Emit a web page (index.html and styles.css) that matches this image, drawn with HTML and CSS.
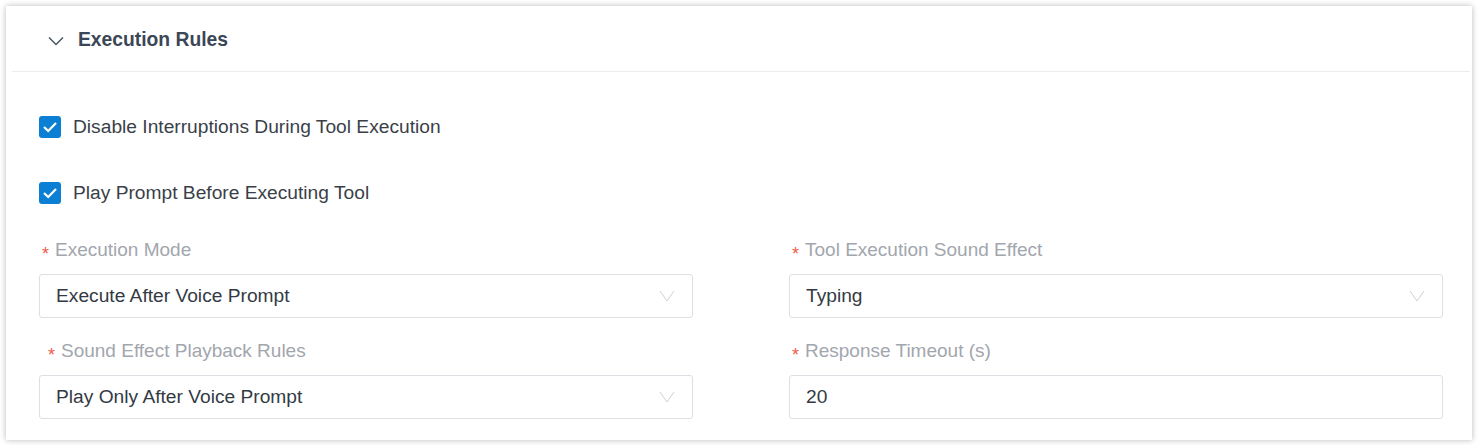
FILE: index.html
```html
<!DOCTYPE html>
<html lang="en">
<head>
  <meta charset="utf-8">
  <title>Execution Rules</title>
  <link rel="stylesheet" href="styles.css">
</head>
<body>
  <div class="page">
    <div class="card">
      <div class="card-head">
        <svg class="arrow" width="16" height="10" viewBox="0 0 16 10"><path d="M1 1.5 L8 8.5 L15 1.5" fill="none" stroke="#4a5563" stroke-width="1.5"/></svg>
        <span class="title">Execution Rules</span>
      </div>
      <div class="card-body">
        <label class="check">
          <span class="box"><svg width="22" height="22" viewBox="0 0 22 22"><path d="M5 11 L9.2 15 L17 7" fill="none" stroke="#fff" stroke-width="2.2"/></svg></span>
          Disable Interruptions During Tool Execution
        </label>
        <label class="check">
          <span class="box"><svg width="22" height="22" viewBox="0 0 22 22"><path d="M5 11 L9.2 15 L17 7" fill="none" stroke="#fff" stroke-width="2.2"/></svg></span>
          Play Prompt Before Executing Tool
        </label>

        <div class="grid">
          <div class="item">
            <div class="label"><span class="req">*</span>Execution Mode</div>
            <div class="select">Execute After Voice Prompt
              <svg class="caret" width="16" height="12" viewBox="0 0 16 12"><path d="M1 1 L8 11 L15 1" fill="none" stroke="#cdd1d6" stroke-width="1"/></svg>
            </div>
          </div>
          <div class="item">
            <div class="label"><span class="req">*</span>Tool Execution Sound Effect</div>
            <div class="select">Typing
              <svg class="caret" width="16" height="12" viewBox="0 0 16 12"><path d="M1 1 L8 11 L15 1" fill="none" stroke="#cdd1d6" stroke-width="1"/></svg>
            </div>
          </div>
          <div class="item">
            <div class="label shifted"><span class="req">*</span>Sound Effect Playback Rules</div>
            <div class="select">Play Only After Voice Prompt
              <svg class="caret" width="16" height="12" viewBox="0 0 16 12"><path d="M1 1 L8 11 L15 1" fill="none" stroke="#cdd1d6" stroke-width="1"/></svg>
            </div>
          </div>
          <div class="item">
            <div class="label"><span class="req">*</span>Response Timeout (s)</div>
            <div class="input">20</div>
          </div>
        </div>
      </div>
    </div>
  </div>
</body>
</html>
```

FILE: styles.css
```css
body {
  margin: 0;
  background: #fff;
  font-family: "Liberation Sans", Arial, sans-serif;
  color: #333a44;
}

.page {
  padding: 6px;
}

.card {
  width: 1466px;
  height: 434px;
  box-sizing: border-box;
  background: #fff;
  box-shadow: 0 0 6px rgba(0, 0, 0, 0.28);
}

.card-head {
  height: 66px;
  display: flex;
  align-items: center;
  border-bottom: 1px solid #ececec;
  margin: 0 2px 0 6px;
  padding: 3px 0 0 36px;
  box-sizing: border-box;
}

.arrow {
  margin-right: 14px;
  margin-top: 2px;
}

.title {
  font-size: 19.3px;
  font-weight: bold;
  color: #3b4656;
}

.card-body {
  padding: 44px 30px 0 33px;
}

.check {
  display: flex;
  align-items: center;
  height: 22px;
  font-size: 19.2px;
  color: #3a3f48;
  margin-bottom: 44px;
}

.box {
  width: 22px;
  height: 22px;
  border-radius: 3px;
  background: #0b7fd3;
  display: flex;
  margin-right: 12px;
}

.grid {
  display: grid;
  grid-template-columns: 654px 654px;
  column-gap: 96px;
  row-gap: 21px;
  margin-top: -10px;
}

.label {
  height: 24px;
  line-height: 24px;
  font-size: 19px;
  color: #a2a6ad;
  margin-bottom: 12px;
  padding-left: 3px;
}

.label.shifted {
  padding-left: 9px;
}

.req {
  display: inline-block;
  color: #f05b4b;
  font-size: 18px;
  width: 13px;
  vertical-align: -4px;
}

.select,
.input {
  height: 44px;
  box-sizing: border-box;
  border: 1px solid #dcdfe4;
  border-radius: 3px;
  display: flex;
  align-items: center;
  justify-content: space-between;
  padding: 0 17px 0 16px;
  font-size: 19.2px;
  color: #333a44;
}
```
